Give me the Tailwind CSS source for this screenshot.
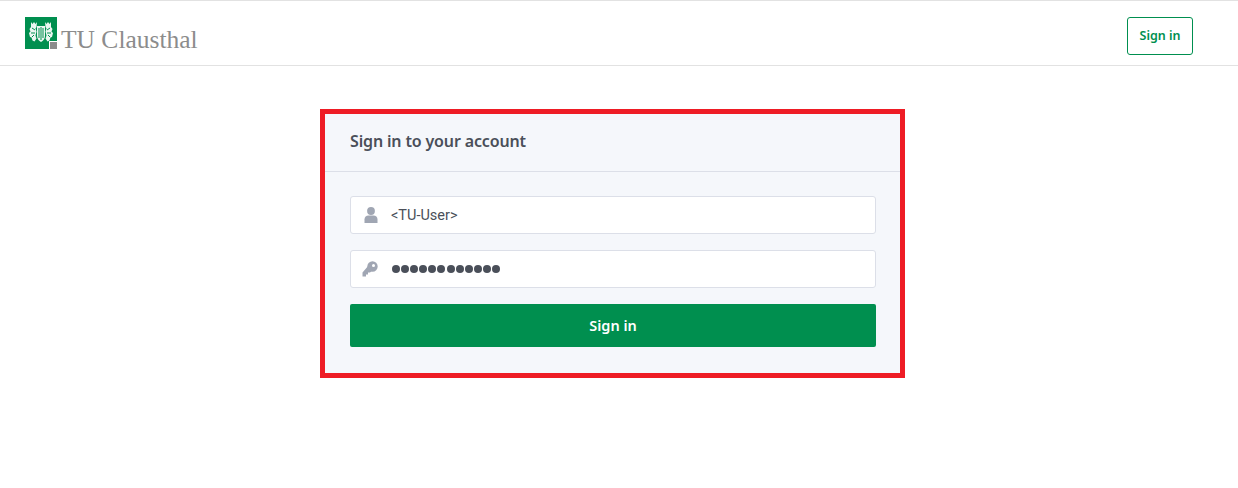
<!DOCTYPE html>
<html lang="en">
<head>
<meta charset="utf-8">
<title>Sign in</title>
<script src="https://cdn.jsdelivr.net/npm/@tailwindcss/browser@4"></script>
</head>
<body class="bg-white font-['Noto_Sans',sans-serif]">
<header class="h-[66px] border-t border-b border-[#e2e2e2] flex items-start justify-between pt-[16px] pl-[25px] pr-[45px]">
  <a class="flex items-end h-[32px]" href="#">
    <svg class="w-[32px] h-[32px] shrink-0" viewBox="0 0 32 32">
      <rect width="32" height="32" fill="#008f4f"/>
      <rect x="24" y="24" width="8" height="8" fill="#fff"/>
      <rect x="25" y="25" width="7" height="7" fill="#8c8c8c"/>
      <g fill="#fff" opacity=".92">
        <path d="M12 9h8v10c0 3-2 5-4 6-2-1-4-3-4-6z"/>
        <path d="M6 5l1.500 2L9 5l1.500 2L12 5l-.5 5-1 1.500 1 3-1 4 1 3-2 3-2-1-1-3-1.500-.5L4 16l1.500-1.500L4.500 12 6 10z"/>
        <path d="M26 5l-1.500 2L23 5l-1.500 2L20 5l.5 5 1 1.500-1 3 1 4-1 3 2 3 2-1 1-3 1.500-.5L28 16l-1.500-1.500 1-2.500L26 10z"/>
      </g>
      <g fill="none" stroke="#008f4f" stroke-width="1">
        <path d="M14 11v10M16 10v13M18 11v10M7 11l3 2M25 11l-3 2M6 16h4M26 16h-4M7 20l2-2M25 20l-2-2"/>
      </g>
    </svg>
    <span class="font-['Liberation_Serif',serif] text-[25.5px] leading-[24px] text-[#8c8c8c] ml-[4px] translate-y-[3px]">TU Clausthal</span>
  </a>
  <button class="w-[66px] h-[38px] border border-[#008f4f] rounded-[3px] text-[#008f4f] text-[12.5px] font-semibold">Sign in</button>
</header>
<main class="flex justify-center pt-[43px] pr-[13px]">
  <section class="w-[585px] border-[5px] border-[#ee1c25] bg-[#f5f7fb]">
    <div class="h-[58px] pb-[4px] border-b border-[#dcdfe8] px-[25px] flex items-center">
      <h1 class="text-[16px] font-semibold text-[#4a4f59] tracking-[-0.15px]">Sign in to your account</h1>
    </div>
    <form class="pl-[25px] pr-[24px] pt-[24px] pb-[26px] flex flex-col gap-[16px]">
      <div class="h-[38px] bg-white border border-[#dcdfe8] rounded-[3px] flex items-center">
        <svg class="w-[14px] h-[16px] ml-[13px] mb-[1px]" viewBox="0 0 14 16" fill="#a0a6b3">
          <circle cx="7" cy="4" r="3.900"/>
          <path d="M0.500 16v-3.500c0-2.400 1.700-4 4-4h5c2.300 0 4 1.600 4 4V16z"/>
        </svg>
        <span class="ml-[13px] mt-[1px] font-['Roboto',sans-serif] text-[14.5px] text-[#4a4f59]">&lt;TU-User&gt;</span>
      </div>
      <div class="h-[38px] bg-white border border-[#dcdfe8] rounded-[3px] flex items-center">
        <svg class="w-[16px] h-[16px] ml-[11px]" viewBox="0 0 16 16" fill="#a0a6b3">
          <path fill-rule="evenodd" d="M10.500 0.300a5.200 5.200 0 1 1 0 10.400 5.200 5.200 0 0 1 0-10.400zM11.500 3a1.500 1.500 0 1 0 0 3 1.500 1.500 0 0 0 0-3z"/>
          <path d="M6.500 4.500L0.500 11.500V15.500H4V13.500H6V11.500H8L11 9z"/>
        </svg>
        <span class="ml-[14px] flex gap-[1.100px]">
          <i class="w-[8px] h-[8px] rounded-full bg-[#4a4f59]"></i><i class="w-[8px] h-[8px] rounded-full bg-[#4a4f59]"></i><i class="w-[8px] h-[8px] rounded-full bg-[#4a4f59]"></i><i class="w-[8px] h-[8px] rounded-full bg-[#4a4f59]"></i><i class="w-[8px] h-[8px] rounded-full bg-[#4a4f59]"></i><i class="w-[8px] h-[8px] rounded-full bg-[#4a4f59]"></i><i class="w-[8px] h-[8px] rounded-full bg-[#4a4f59]"></i><i class="w-[8px] h-[8px] rounded-full bg-[#4a4f59]"></i><i class="w-[8px] h-[8px] rounded-full bg-[#4a4f59]"></i><i class="w-[8px] h-[8px] rounded-full bg-[#4a4f59]"></i><i class="w-[8px] h-[8px] rounded-full bg-[#4a4f59]"></i><i class="w-[8px] h-[8px] rounded-full bg-[#4a4f59]"></i>
        </span>
      </div>
      <button type="button" class="h-[43px] bg-[#008f4f] rounded-[2px] text-white text-[14.5px] font-semibold">Sign in</button>
    </form>
  </section>
</main>
</body>
</html>
